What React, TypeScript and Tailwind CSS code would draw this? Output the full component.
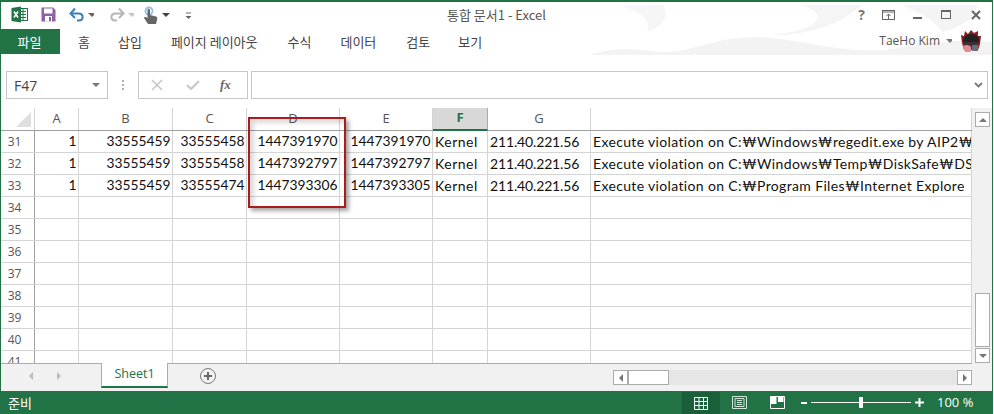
const cols = [
  { k: "A", w: "w-[44px]" },
  { k: "B", w: "w-[94px]" },
  { k: "C", w: "w-[74px]" },
  { k: "D", w: "w-[93px]" },
  { k: "E", w: "w-[93px]" },
  { k: "F", w: "w-[55px]" },
  { k: "G", w: "w-[103px]" },
  { k: "", w: "w-[381px]" },
];
const data = [
  ["1", "33555459", "33555458", "1447391970", "1447391970", "Kernel", "211.40.221.56", "Execute violation on C:₩Windows₩regedit.exe by AIP2₩"],
  ["1", "33555459", "33555458", "1447392797", "1447392797", "Kernel", "211.40.221.56", "Execute violation on C:₩Windows₩Temp₩DiskSafe₩DS"],
  ["1", "33555459", "33555474", "1447393306", "1447393305", "Kernel", "211.40.221.56", "Execute violation on C:₩Program Files₩Internet Explore"],
];
const rows = Array.from({ length: 11 }, (_, i) => 31 + i);
const tabs: [string, string][] = [
  ["홈", "ml-[18px]"],
  ["삽입", "ml-[28px]"],
  ["페이지 레이아웃", "ml-[29px]"],
  ["수식", "ml-[30px]"],
  ["데이터", "ml-[29px]"],
  ["검토", "ml-[30px]"],
  ["보기", "ml-[28px]"],
];

function Tri({ dir, className }: { dir: "up" | "down" | "left" | "right"; className?: string }) {
  const p = { up: "0,5 4,1 8,5", down: "0,1 8,1 4,5", left: "5,0 5,8 1,4", right: "1,0 1,8 5,4" }[dir];
  return (
    <svg width={dir === "up" || dir === "down" ? 8 : 6} height={dir === "up" || dir === "down" ? 6 : 8} className={className}>
      <polygon points={p} fill="currentColor" />
    </svg>
  );
}

function TitleBar() {
  return (
    <div className="h-[27px] relative flex items-center shrink-0 pb-[2px]">
      <div className="ml-[10px] flex items-center">
        <svg width="17" height="17" viewBox="0 0 17 17">
          <rect x="7" y="2.5" width="9.5" height="12" fill="#fff" stroke="#217346" />
          <path d="M9 5.5h6M9 8.5h6M9 11.5h6M12 3v11" stroke="#217346" strokeWidth="1" />
          <path d="M0.5 2 L10 0.5 V16.5 L0.5 15Z" fill="#217346" />
          <path d="M3 5.5 L7 11.5 M7 5.5 L3 11.5" stroke="#fff" strokeWidth="1.6" />
        </svg>
        <svg width="15" height="15" viewBox="0 0 15 15" className="ml-[13px]">
          <path d="M0.5 0.5 H12 L14.5 3 V14.5 H0.5 Z" fill="#8f5fa8" />
          <rect x="3" y="1.5" width="8.5" height="5" fill="#fff" />
          <rect x="4" y="9" width="7" height="5.5" fill="#fff" />
          <rect x="8" y="10" width="2" height="4" fill="#8f5fa8" />
        </svg>
        <svg width="16" height="14" viewBox="0 0 16 14" className="ml-[13px]">
          <path d="M2 5.5 H9.5 C15 5.5 15 12.5 9.5 12.5 H8" fill="none" stroke="#3c7fb8" strokeWidth="2" />
          <path d="M6 0.5 L1.5 5.5 L6 10" fill="none" stroke="#3c7fb8" strokeWidth="2" />
        </svg>
        <Tri dir="down" className="ml-[3px] text-[#666] w-[6px]" />
        <svg width="16" height="14" viewBox="0 0 16 14" className="ml-[15px]">
          <path d="M14 5.5 H6.5 C1 5.5 1 12.5 6.5 12.5 H8" fill="none" stroke="#b5b5b5" strokeWidth="2" />
          <path d="M10 0.5 L14.5 5.5 L10 10" fill="none" stroke="#b5b5b5" strokeWidth="2" />
        </svg>
        <Tri dir="down" className="ml-[3px] text-[#c6c6c6] w-[6px]" />
        <svg width="15" height="18" viewBox="0 0 15 18" className="ml-[9px]">
          <circle cx="6" cy="5" r="4.5" fill="#9dbfe0" />
          <circle cx="6" cy="5" r="2.6" fill="#fff" />
          <path d="M4.5 4 C4.5 2.5 7 2.5 7 4 V9 L13 10.5 C14.5 11 14.5 12 14 14 L13 18 H5 L1 12 C1 10.5 3 10.5 4.5 12 Z" fill="#666" />
        </svg>
        <Tri dir="down" className="ml-[4px] text-[#444]" />
        <svg width="7" height="8" viewBox="0 0 7 8" className="ml-[15px] mt-[2px]">
          <path d="M1 1h5" stroke="#666" />
          <polygon points="0.5,4 6.5,4 3.5,7" fill="#666" />
        </svg>
      </div>
      <div className="absolute left-0 right-0 top-[5px] text-center text-[13px] leading-[16px] text-[#555] [font-family:'Noto_Sans_CJK_KR','Open_Sans',sans-serif]">
        통합 문서1 - Excel
      </div>
      <div className="ml-auto flex items-center">
        <span className="text-[14px] font-bold text-[#777] leading-none [font-family:'Open_Sans',sans-serif]">?</span>
        <svg width="13" height="10" viewBox="0 0 13 10" className="ml-[17px]">
          <rect x="0.5" y="0.5" width="12" height="9" fill="none" stroke="#666" />
          <path d="M1 2h11" stroke="#666" />
          <path d="M6.5 9V4M4.5 6l2-2 2 2" fill="none" stroke="#666" />
        </svg>
        <div className="ml-[18px] w-[9px] h-[2px] bg-[#666] mt-[6px]" />
        <div className="ml-[19px] w-[10px] h-[9px] border border-t-2 border-[#666]" />
        <svg width="10" height="10" viewBox="0 0 10 10" className="ml-[20px] mr-[11px]">
          <path d="M1 1 L9 9 M9 1 L1 9" stroke="#666" strokeWidth="2" />
        </svg>
      </div>
    </div>
  );
}

function Watermark() {
  return (
    <svg width="400" height="53" viewBox="0 0 400 53" className="absolute right-0 top-0 pointer-events-none">
      <path d="M0 52 C30 44 45 48 70 50 C100 52 130 30 180 36 C230 42 250 50 290 48 C320 46 330 36 400 40 V53 H0Z" fill="#f3f3f3" />
      <path d="M30 4 C50 10 60 20 55 30 C70 25 80 12 70 3Z" fill="#f6f6f6" />
      <path d="M210 3 C240 14 225 28 180 33 C215 34 250 22 270 3Z" fill="#f5f5f5" />
      <path d="M310 3 C330 12 345 20 350 30 C370 25 385 15 385 3Z" fill="#f4f4f4" />
    </svg>
  );
}

function Avatar() {
  return (
    <svg width="22" height="24" viewBox="0 0 22 24">
      <path d="M2 14 L1 6 L4 7 L5 2 L8 5 L11 1 L14 4 L18 2 L18 7 L21 7 L20 15 L18 21 H4Z" fill="#8a1f22" />
      <ellipse cx="11" cy="11" rx="8" ry="6" fill="#222" />
      <path d="M4 13 H18 V18 H4Z" fill="#3b3035" />
      <path d="M3 17 C6 15 10 16 11 18 V23 H5 Z" fill="#e58a94" />
      <rect x="12" y="16" width="6" height="6" fill="#66707c" />
    </svg>
  );
}

function RibbonTabs() {
  return (
    <div className="h-[25px] flex items-center shrink-0 relative [font-family:'Noto_Sans_CJK_KR',sans-serif] text-[13px] text-[#444]">
      <div className="w-[59px] h-full bg-[#217346] text-white flex items-center justify-center pr-[2px]">파일</div>
      {tabs.map(([t, m]) => (
        <span key={t} className={m}>{t}</span>
      ))}
      <div className="ml-auto flex items-center mr-[10px] pb-[2px]">
        <span className="text-[12px] text-[#555] [font-family:'Open_Sans',sans-serif]">TaeHo Kim</span>
        <Tri dir="down" className="ml-[6px] mr-[8px] text-[#777] w-[6px]" />
        <Avatar />
      </div>
    </div>
  );
}

function FormulaBar() {
  return (
    <div className="h-[28px] mt-[17px] flex shrink-0 text-[#444]">
      <div className="ml-[5px] w-[102px] border border-[#c6c6c6] flex items-center justify-between pl-[7px] pr-[7px] text-[14px] [font-family:'Open_Sans',sans-serif]">
        <span>F47</span>
        <Tri dir="down" className="text-[#777]" />
      </div>
      <div className="w-[30px] flex flex-col items-center justify-center gap-[2px]">
        <i className="w-[2px] h-[2px] bg-[#b0b0b0]" />
        <i className="w-[2px] h-[2px] bg-[#b0b0b0]" />
        <i className="w-[2px] h-[2px] bg-[#b0b0b0]" />
      </div>
      <div className="w-[110px] border border-[#c6c6c6] flex items-center">
        <svg width="12" height="12" viewBox="0 0 12 12" className="ml-[12px]">
          <path d="M1 1 L11 11 M11 1 L1 11" stroke="#c8c8c8" strokeWidth="1.6" />
        </svg>
        <svg width="14" height="12" viewBox="0 0 14 12" className="ml-[23px]">
          <path d="M1 6 L5 10 L13 2" fill="none" stroke="#c8c8c8" strokeWidth="2.2" />
        </svg>
        <span className="ml-[20px] italic font-bold text-[13px] text-[#666] [font-family:'Liberation_Serif',serif]">fx</span>
      </div>
      <div className="ml-[3px] w-[737px] border border-[#c6c6c6] flex items-center justify-end pr-[4px]">
        <svg width="9" height="6" viewBox="0 0 9 6">
          <path d="M1 1 L4.5 4.5 L8 1" fill="none" stroke="#777" strokeWidth="1.8" />
        </svg>
      </div>
    </div>
  );
}

function Sheet() {
  return (
    <div className="flex-1 min-h-0 overflow-hidden relative [font-family:'Lato',sans-serif] text-[14px] text-[#111]">
      <div className="flex h-[23px] border-b border-[#9f9f9f]">
        <div className="w-[34px] border-r border-[#d4d4d4] relative shrink-0">
          <svg width="15" height="15" className="absolute right-[3px] bottom-[3px]">
            <polygon points="15,0 15,15 0,15" fill="#dfdfdf" />
          </svg>
        </div>
        {cols.map((c) => (
          <div
            key={c.k + c.w}
            className={`${c.w} shrink-0 border-r flex items-center justify-center text-[13px] pb-[1px] [font-family:'Open_Sans',sans-serif] ${
              c.k === "F" ? "bg-[#d8d8d8] border-[#ababab] border-b-2 border-b-[#217346] text-[#217346] font-bold mb-[-1px]" : "border-[#d4d4d4] text-[#555]"
            }`}
          >
            {c.k}
          </div>
        ))}
      </div>
      {rows.map((r, i) => (
        <div key={r} className="flex h-[22px] border-b border-[#d4d4d4]">
          <div className="w-[34px] shrink-0 border-r border-[#9f9f9f] flex items-center justify-center pr-[6px] text-[12px] text-[#555] [font-family:'Open_Sans',sans-serif]">
            {r}
          </div>
          {cols.map((c, j) => {
            const v = data[i]?.[j];
            return (
              <div
                key={c.k + c.w}
                className={`${c.w} shrink-0 border-r border-[#d4d4d4] flex items-center overflow-hidden whitespace-nowrap ${
                  j === 5
                    ? "justify-start pl-[2px] tracking-[0.5px]"
                    : j === 6
                      ? "justify-start pl-[2px] tracking-[-0.15px]"
                      : j === 7
                        ? "justify-start pl-[2px] tracking-[0.35px]"
                        : "justify-end pr-[1.5px] text-[13.8px]"
                }`}
              >
                {v}
              </div>
            );
          })}
        </div>
      ))}
      <div className="absolute left-[247px] top-[9px] w-[98px] h-[91px] border-[2px] border-[#a81c1c] shadow-[3px_3px_4px_rgba(0,0,0,0.35),inset_4px_4px_4px_rgba(0,0,0,0.14)]" />
    </div>
  );
}

function ScrollBtn({ dir, className }: { dir: "up" | "down" | "left" | "right"; className?: string }) {
  return (
    <div className={`w-[15px] h-[15px] border border-[#ababab] bg-white flex items-center justify-center text-[#777] shrink-0 ${className ?? ""}`}>
      <Tri dir={dir} />
    </div>
  );
}

function VScroll() {
  return (
    <div className="w-[20px] shrink-0 bg-[#f1f1f1] flex flex-col items-start pl-[3px] relative">
      <ScrollBtn dir="up" className="mt-[4px]" />
      <div className="flex-1" />
      <div className="w-[15px] h-[54px] border border-[#ababab] bg-white" />
      <ScrollBtn dir="down" className="mt-[1px] mb-[28px] h-[14px]" />
    </div>
  );
}

function TabBar() {
  return (
    <div className="h-[28px] shrink-0 flex bg-[#f1f1f1] border-t border-[#ababab] relative">
      <div className="w-[100px] flex items-center text-[#bcbcbc] h-[24px]">
        <Tri dir="left" className="ml-[27px]" />
        <Tri dir="right" className="ml-[22px]" />
      </div>
      <div className="w-[67px] h-[25px] mt-[-1px] bg-white border-x border-[#ababab] border-b-2 border-b-[#217346] flex items-center justify-center text-[12.5px] text-[#217346] [font-family:'Open_Sans',sans-serif]">
        Sheet1
      </div>
      <div className="ml-[32px] mt-[4px] w-[16px] h-[16px] rounded-full border-[1.5px] border-[#777] flex items-center justify-center text-[#666]">
        <svg width="8" height="8" viewBox="0 0 8 8">
          <path d="M4 0V8M0 4H8" stroke="currentColor" strokeWidth="2" />
        </svg>
      </div>
      <div className="ml-auto w-[359px] h-[15px] mt-[6px] bg-[#e6e6e6] flex">
        <ScrollBtn dir="left" />
        <div className="w-[41px] h-[15px] border border-[#ababab] bg-white" />
        <div className="flex-1" />
        <ScrollBtn dir="right" />
      </div>
    </div>
  );
}

function StatusBar() {
  return (
    <div className="h-[23px] shrink-0 bg-[#217346] text-white flex items-center ml-[-1px] mr-[-1px]">
      <span className="ml-[8px] w-[26px] text-[13px] [font-family:'Noto_Sans_CJK_KR',sans-serif]">준비</span>
      <div className="ml-[648px] w-[38px] h-[22px] mt-[1px] bg-[#19603a] flex items-center justify-center">
        <svg width="14" height="13" viewBox="0 0 14 13">
          <path d="M0.5 0.5H13.5V12.5H0.5ZM5 0.5V12.5M9.5 0.5V12.5M0.5 4.5H13.5M0.5 8.5H13.5" fill="none" stroke="#fff" />
        </svg>
      </div>
      <svg width="15" height="13" viewBox="0 0 15 13" className="ml-[12px]">
        <path d="M0.5 0.5H14.5V12.5H0.5Z" fill="none" stroke="#cfe5d8" />
        <path d="M3 2.5H12V10.5H3ZM5 4.5H10M5 6.5H10M5 8.5H10" fill="none" stroke="#cfe5d8" />
      </svg>
      <svg width="15" height="13" viewBox="0 0 15 13" className="ml-[23px]">
        <path d="M0.5 0.5H14.5V12.5H0.5Z" fill="none" stroke="#fff" />
        <path d="M1 1H6.5V8H1ZM8 1H13.5V6H8Z" fill="#fff" />
      </svg>
      <div className="ml-[16px] w-[6px] h-[2px] bg-white" />
      <div className="ml-[4px] w-[100px] h-[1px] bg-white relative">
        <div className="absolute left-[48px] top-[-5px] w-[4px] h-[11px] bg-white" />
      </div>
      <svg width="9" height="9" viewBox="0 0 9 9" className="ml-[4px]">
        <path d="M4.5 0V9M0 4.5H9" stroke="#fff" strokeWidth="2" />
      </svg>
      <span className="ml-[13px] text-[13px] [font-family:'Open_Sans',sans-serif]">100 %</span>
    </div>
  );
}

export default function App() {
  return (
    <div className="w-[994px] h-[414px] bg-white overflow-hidden">
      <div className="w-[993px] h-[414px] border-x border-t-2 border-[#217346] flex flex-col relative">
        <Watermark />
        <TitleBar />
        <RibbonTabs />
        <FormulaBar />
        <div className="h-[9px] shrink-0" />
        <div className="flex-1 min-h-0 flex flex-col">
          <div className="flex-1 min-h-0 flex">
            <div className="flex-1 min-w-0 flex flex-col">
              <Sheet />
              <TabBar />
            </div>
            <VScroll />
          </div>
          <StatusBar />
        </div>
      </div>
    </div>
  );
}
